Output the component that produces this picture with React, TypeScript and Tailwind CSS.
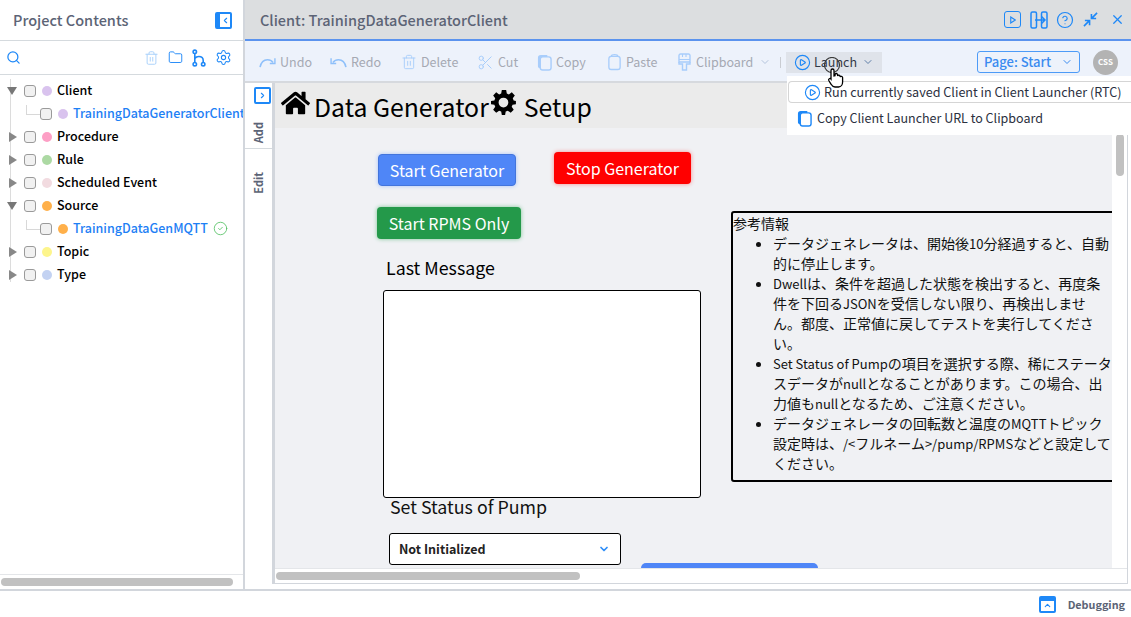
import { ChevronDown, ChevronLeft, ChevronRight, CircleCheck, Search, Trash2, Folder, Settings, Scissors, CirclePlay, CircleHelp, X } from 'lucide-react'

const font = 'font-["Noto_Sans_CJK_JP","Noto_Sans",sans-serif]'

const tree = [
  { label: 'Client', color: 'bg-[#d9c3ee]', open: true, child: 'TrainingDataGeneratorClient' },
  { label: 'Procedure', color: 'bg-[#fd9fc5]' },
  { label: 'Rule', color: 'bg-[#acd9a3]' },
  { label: 'Scheduled Event', color: 'bg-[#f2dbe0]' },
  { label: 'Source', color: 'bg-[#ffb04a]', open: true, child: 'TrainingDataGenMQTT', ok: true },
  { label: 'Topic', color: 'bg-[#fdf58c]' },
  { label: 'Type', color: 'bg-[#c3d2f2]' },
]

function Check() {
  return <span className="w-[12px] h-[12px] rounded-[3px] border border-[#9a9a9a] bg-[#f1f1f1] shrink-0" />
}

function CopyIcon({ className = '' }: { className?: string }) {
  return (
    <svg viewBox="0 0 16 18" className={className} fill="none" stroke="currentColor" strokeWidth="1.5">
      <path d="M1 4c0-2 1-3 3-3h7v2H5c-1 0-1.500.5-1.500 1.500V15H3c-1.300 0-2-.8-2-2z" fill="currentColor" stroke="none" />
      <rect x="3.500" y="3" width="11.500" height="14" rx="2.500" />
    </svg>
  )
}

function PasteIcon({ className = '' }: { className?: string }) {
  return (
    <svg viewBox="0 0 16 18" className={className} fill="none" stroke="currentColor" strokeWidth="1.4">
      <rect x="2" y="3" width="12" height="14" rx="2.500" />
      <path d="M4.500 3c0-1.200 1.200-1.800 3.500-1.800s3.500.6 3.500 1.800" />
    </svg>
  )
}

function UndoArc({ className = '', flip }: { className?: string; flip?: boolean }) {
  return (
    <svg viewBox="0 0 18 14" className={`${className} ${flip ? '-scale-x-100' : ''}`} fill="none" stroke="currentColor" strokeWidth="1.700">
      <path d="M1 12c1-5 4-8 8-8 2.500 0 4.500 1 6 3" />
      <path d="M17 2.500v5.500h-5.500" strokeWidth="1.500" />
    </svg>
  )
}

function BrushIcon({ className = '' }: { className?: string }) {
  return (
    <svg viewBox="0 0 14 18" className={className} fill="none" stroke="currentColor" strokeWidth="1.400">
      <path d="M3 1h8a1.500 1.500 0 0 1 1.500 1.500V9H1.500V2.500A1.500 1.500 0 0 1 3 1z" />
      <path d="M1.500 6.500h11M5 1v3M8.500 1v3" strokeWidth="1.100" />
      <path d="M1.500 9v2h3.500v6h4v-6h3.500V9" />
    </svg>
  )
}

function BranchIcon({ className = '' }: { className?: string }) {
  return (
    <svg viewBox="0 0 14 18" className={className} fill="none" stroke="#1e88f7" strokeWidth="1.600">
      <circle cx="2.800" cy="2.800" r="1.700" />
      <circle cx="2.800" cy="15.200" r="1.700" />
      <circle cx="11.200" cy="15.200" r="1.700" />
      <path d="M2.800 4.500v9M2.800 9.500c1-1.500 2.500-2 4-2 2.500 0 4.400 1.500 4.400 4v2" />
    </svg>
  )
}

function ToolItem({ icon, label, chevron, width }: { icon: React.ReactNode; label: string; chevron?: boolean; width: string }) {
  return (
    <div className={`flex items-center gap-[4px] text-[12.5px] text-[#a5a9b3] ${width}`}>
      <span className="text-[#a8cdfb] flex">{icon}</span>
      <span>{label}</span>
      {chevron && <ChevronDown className="w-[12px] h-[12px] ml-[2px] text-[#b4c4dc]" />}
    </div>
  )
}

function L({ children }: { children: React.ReactNode }) {
  return <span className="text-[13px] leading-none">{children}</span>
}

export default function App() {
  return (
    <div className={`w-[1131px] h-[617px] overflow-hidden bg-white flex flex-col ${font}`}>
      <div className="flex h-[589px] border-b-2 border-[#d2d6dc] box-content">
        {/* Project contents */}
        <div className="w-[243px] h-full flex flex-col shrink-0">
          <div className="h-[41px] flex items-center justify-between pl-[13px] pr-[11px] border-b border-[#d5dade]">
            <span className="text-[14.5px] font-medium text-[#5c6476]">Project Contents</span>
            <span className="w-[17px] h-[17px] rounded-[2px] border-2 border-l-[5px] border-[#1e88f7] flex items-center justify-center">
              <ChevronLeft className="w-[9px] h-[9px] text-[#1e88f7]" strokeWidth={3} />
            </span>
          </div>
          <div className="h-[34px] flex items-center pl-[6px] pr-[11px] border-b border-[#d5dade]">
            <Search className="w-[15px] h-[15px] text-[#1e88f7]" />
            <div className="ml-auto flex items-center gap-[9px]">
              <Trash2 className="w-[15px] h-[16px] text-[#a8d0fb]" strokeWidth={1.5} />
              <Folder className="w-[15px] h-[15px] text-[#1e88f7]" strokeWidth={1.5} />
              <BranchIcon className="w-[14px] h-[18px]" />
              <Settings className="w-[17px] h-[17px] text-[#1e88f7]" strokeWidth={1.5} />
            </div>
          </div>
          <div className="flex-1 pt-[4px] overflow-hidden relative">
            <div className="absolute left-[10px] top-[4px] h-[203px] w-px bg-[#dcdcdc]" />
            {tree.map((t) => (
              <div key={t.label}>
                <div className="h-[23px] flex items-center relative text-[12.5px] font-medium text-black">
                  <span className="w-[24px] flex justify-center shrink-0 pl-[1px]">
                    {t.open ? (
                      <span className="border-x-[5px] border-x-transparent border-t-[8px] border-t-[#777] -ml-[1px]" />
                    ) : (
                      <span className="border-y-[5px] border-y-transparent border-l-[8px] border-l-[#888] " />
                    )}
                  </span>
                  <Check />
                  <span className={`w-[10px] h-[10px] rounded-full ml-[6px] mr-[5px] ${t.color}`} />
                  <span>{t.label}</span>
                </div>
                {t.child && (
                  <div className="h-[23px] flex items-center text-[12.5px] font-medium text-[#1e80f5] whitespace-nowrap overflow-hidden">
                    <span className="w-[14px] h-[10px] ml-[26px] mb-[8px] border-l border-b border-[#d8d8d8] shrink-0" />
                    <Check />
                    <span className={`w-[10px] h-[10px] rounded-full ml-[6px] mr-[5px] shrink-0 ${t.color}`} />
                    <span>{t.child}</span>
                    {t.ok && <CircleCheck className="w-[15px] h-[15px] ml-[5px] text-[#4fbf5f]" strokeWidth={1.3} />}
                  </div>
                )}
              </div>
            ))}
          </div>
          <div className="h-[15px] flex items-center px-[1px] border-t border-[#e4e6e9]">
            <div className="w-[232px] h-[8px] rounded-full bg-[#c1c1c1]" />
          </div>
        </div>
        <div className="w-[2px] h-full bg-[#d2d6dc] shrink-0" />

        {/* Client editor */}
        <div className="flex-1 flex flex-col min-w-0 relative">
          <div className="h-[41px] bg-[#dcdee0] border-b-2 border-[#5b93ee] flex items-center pl-[15px] pr-[6px]">
            <span className="text-[14.5px] font-medium text-[#5c6476]">Client: TrainingDataGeneratorClient</span>
            <div className="ml-auto flex items-center text-[#1e88f7]">
              <span className="w-[17px] h-[17px] border-[1.5px] border-current rounded-[3px] flex items-center justify-center">
                <svg viewBox="0 0 8 10" className="w-[6px] h-[8px]" fill="none" stroke="currentColor" strokeWidth="1.500"><path d="M1 1l6 4-6 4z" /></svg>
              </span>
              <svg viewBox="0 0 18 18" className="w-[18px] h-[18px] ml-[9px]" fill="none" stroke="currentColor" strokeWidth="1.500">
                <rect x="1" y="1" width="5.500" height="16" rx="1.500" />
                <rect x="11.500" y="1" width="5.500" height="16" rx="1.500" />
                <path d="M5 9h10M11.500 5.500L15 9l-3.500 3.500" />
              </svg>
              <CircleHelp className="w-[18px] h-[18px] ml-[8px]" strokeWidth={1.6} />
              <svg viewBox="0 0 16 16" className="w-[15px] h-[15px] ml-[9px]" fill="none" stroke="currentColor" strokeWidth="1.700">
                <path d="M15 1L9.500 6.500M9 2v5h5M1 15l5.500-5.500M2 9h5v5" />
              </svg>
              <X className="w-[15px] h-[15px] ml-[12px]" strokeWidth={2} />
            </div>
          </div>
          <div className="h-[42px] bg-[#edf2fb] border-b-2 border-[#d6d9de] flex items-center pl-[14px] pr-[13px] pt-[2px]">
            <div className="flex items-center">
              <ToolItem width="w-[71px]" icon={<UndoArc className="w-[17px] h-[13px] text-[#8fc0fa]" />} label="Undo" />
              <ToolItem width="w-[71px]" icon={<UndoArc flip className="w-[17px] h-[13px] text-[#8fc0fa]" />} label="Redo" />
              <ToolItem width="w-[76px]" icon={<Trash2 className="w-[16px] h-[18px]" strokeWidth={1.4} />} label="Delete" />
              <ToolItem width="w-[60px]" icon={<Scissors className="w-[17px] h-[17px]" strokeWidth={1.4} />} label="Cut" />
              <ToolItem width="w-[70px]" icon={<CopyIcon className="w-[15px] h-[17px]" />} label="Copy" />
              <ToolItem width="w-[70px]" icon={<PasteIcon className="w-[15px] h-[18px]" />} label="Paste" />
              <ToolItem width="w-[103px]" icon={<BrushIcon className="w-[15px] h-[18px]" />} label="Clipboard" chevron />
            </div>
            <span className="w-px h-[11px] bg-[#c9ccd2] mr-[5px]" />
            <div className="w-[96px] h-[21px] bg-[#dfe3ea] flex items-center pl-[8px] gap-[3px] text-[12.5px] text-[#333a48]">
              <CirclePlay className="w-[17px] h-[17px] text-[#1e88f7]" strokeWidth={1.6} />
              <span>Launch</span>
              <ChevronDown className="w-[12px] h-[12px] ml-[2px] text-[#5e7ea8]" />
            </div>
            <div className="ml-auto flex items-center gap-[13px]">
              <div className="w-[103px] h-[22px] border border-[#4d9bf7] rounded-[3px] flex items-center justify-center gap-[10px] text-[13px] font-medium text-[#3a8bf0]">
                Page: Start
                <ChevronDown className="w-[12px] h-[12px]" />
              </div>
              <span className="w-[25px] h-[25px] rounded-full bg-[#b3b3b3] text-white text-[8px] font-bold flex items-center justify-center">CSS</span>
            </div>
          </div>

          <div className="flex-1 flex min-h-0 pb-[5px] pr-[3px]">
            {/* Side tabs */}
            <div className="w-[27px] shrink-0 border-r-[3px] border-[#d2d6dc] box-content flex flex-col items-center text-[#5c6476] text-[11px] font-bold">
              <span className="mt-[4px] ml-[8px] w-[17px] h-[17px] rounded-[2px] border-2 border-[#1e88f7] flex items-center justify-center shrink-0">
                <ChevronRight className="w-[9px] h-[9px] text-[#1e88f7]" strokeWidth={3} />
              </span>
              <div className="w-full h-[45px] border-b border-[#d5dade] flex items-start justify-center pt-[18px]">
                <span className="[writing-mode:vertical-rl] rotate-180">Add</span>
              </div>
              <div className="mt-[23px] [writing-mode:vertical-rl] rotate-180">Edit</div>
            </div>

            {/* Canvas */}
            <div className="flex-1 min-w-0 flex flex-col border-r border-b border-[#d2d6dc]">
              <div className="relative flex-1 min-h-0 overflow-hidden bg-[#f0f1f4]">
                <div className="h-[45px] bg-[#ebebeb] flex items-center text-[24.8px] text-black pl-[6px] pt-[2px] whitespace-nowrap">
                  <svg viewBox="0 0 576 512" className="w-[29px] h-[28px] mb-[8px]" fill="black">
                    <path d="M280 148 96 300v164c0 9 7 16 16 16l112-.3c9 0 16-7 16-16V368c0-9 7-16 16-16h64c9 0 16 7 16 16v95.700c0 9 7 16 16 16L464 480c9 0 16-7 16-16V300L296 148c-4-3-12-3-16 0zM572 251l-84-69V44c0-7-5-12-12-12h-56c-7 0-12 5-12 12v72l-89-74c-18-15-44-15-62 0L4 251c-5 4-6 12-2 17l26 31c4 5 12 6 17 2L280 108c4-3 12-3 16 0l235 193c5 4 13 3 17-2l26-31c4-5 3-13-2-17z" />
                  </svg>
                  <span className="ml-[4px]">Data Generator</span>
                  <svg viewBox="0 0 24 24" className="w-[26px] h-[26px] ml-[2px] mb-[10px]" fill="black">
                    <path d="M10 1h4l.6 3.200 1.900.8 2.700-1.900 2.800 2.800-1.900 2.700.8 1.900L23 11v3l-3.100.5-.8 1.900 1.900 2.700-2.800 2.800-2.700-1.900-1.900.8L13 24h-3l-.6-3.200-1.900-.8-2.700 1.900L2 19.100l1.900-2.700-.8-1.900L0 14v-3l3.100-.5.8-1.900L2 5.900 4.800 3.100l2.700 1.900 1.900-.8zM11.500 8a4.500 4.500 0 1 0 0 9 4.500 4.500 0 0 0 0-9z" />
                  </svg>
                  <span className="ml-[7px]">Setup</span>
                </div>

                <button className="absolute left-[103px] top-[71px] w-[138px] h-[32px] rounded-[4px] bg-[#4f86f7] border border-[#4274dc] shadow-[0_0_4px_#a9c3f9] text-white text-[16px]">Start Generator</button>
                <button className="absolute left-[279px] top-[69px] w-[137px] h-[32px] rounded-[4px] bg-[#ff0000] shadow-[0_0_4px_#f58a8a] text-white text-[16px]">Stop Generator</button>
                <button className="absolute left-[102px] top-[124px] w-[144px] h-[32px] rounded-[4px] bg-[#24994a] shadow-[0_0_4px_#7ec596] text-white text-[16px]">Start RPMS Only</button>

                <div className="absolute left-[111px] top-[171px] text-[17.8px] text-black">Last Message</div>
                <div className="absolute left-[108px] top-[207px] w-[318px] h-[208px] bg-white border border-black rounded-[3px]" />

                <div className="absolute left-[115px] top-[410px] text-[17.8px] text-[#111]">Set Status of Pump</div>
                <div className="absolute left-[114px] top-[450px] w-[232px] h-[32px] bg-white border border-black rounded-[3px] flex items-center pl-[9px] pr-[10px] text-[12.5px] font-bold text-[#222]">
                  Not Initialized
                  <ChevronDown className="w-[12px] h-[12px] ml-auto text-[#2f8ef8]" strokeWidth={3.5} />
                </div>
                <div className="absolute left-[366px] top-[480px] w-[177px] h-[20px] rounded-t-[5px] bg-[#4f86f7]" />

                <div className="absolute left-[456px] top-[128px] w-[385px] h-[271px] border-2 border-black rounded-[3px] text-[14px] leading-[20px] text-[#111]">
                  <div>参考情報</div>
                  <ul className="list-disc pl-[40px] pr-[2px] w-[382px]">
                    <li>データジェネレータは、開始後<L>10</L>分経過すると、自動的に停止します。</li>
                    <li><L>Dwell</L>は、条件を超過した状態を検出すると、再度条件を下回る<L>JSON</L>を受信しない限り、再検出しません。都度、正常値に戻してテストを実行してください。</li>
                    <li><L>Set Status of Pump</L>の項目を選択する際、稀にステータスデータが<L>null</L>となることがあります。この場合、出力値も<L>null</L>となるため、ご注意ください。</li>
                    <li>データジェネレータの回転数と温度の<L>MQTT</L>トピック設定時は、<L>/&lt;</L>フルネーム<L>&gt;/pump/RPMS</L>などと設定してください。</li>
                  </ul>
                </div>
                <div className="absolute right-0 top-[45px] bottom-0 w-[15px] bg-white">
                  <div className="mx-auto mt-[6px] w-[8px] h-[42px] rounded-full bg-[#c1c1c1]" />
                </div>
              </div>
              <div className="h-[15px] bg-white border-t border-[#e4e6e9] flex items-center pl-[1px] shrink-0">
                <div className="w-[304px] h-[8px] rounded-full bg-[#c1c1c1]" />
              </div>
            </div>
          </div>

          {/* Launch menu */}
          <div className="absolute left-[542px] top-[76px] w-[344px] h-[59px] bg-white z-10 pl-[1px] pt-[5px]">
            <div className="h-[20px] border border-[#d5d5d5] border-r-0 rounded-l-[4px] flex items-center pl-[15px] gap-[3px] text-[12.6px] text-[#2b3040] whitespace-nowrap box-content">
              <CirclePlay className="w-[17px] h-[17px] text-[#1e88f7]" strokeWidth={1.6} />
              Run currently saved Client in Client Launcher (RTC)
            </div>
            <div className="h-[30px] flex items-center pl-[9px] gap-[5px] text-[12.5px] text-[#2b3040] whitespace-nowrap">
              <CopyIcon className="w-[15px] h-[17px] text-[#1e88f7]" />
              Copy Client Launcher URL to Clipboard
            </div>
          </div>
          {/* Cursor */}
          <svg viewBox="0 0 24 33" className="absolute left-[578px] top-[57px] w-[24px] h-[33px] z-20" fill="none">
            <circle cx="9" cy="8" r="7.500" stroke="#3a3a3a" strokeWidth="1.200" />
            <path d="M8 22V13.500a1.500 1.500 0 0 1 3 0V19l1-.2v-1a1.300 1.300 0 0 1 2.600 0v1.200a1.300 1.300 0 0 1 2.500.3v.8a1.300 1.300 0 0 1 2.500.5V25c0 2.500-1.500 5-4 5h-3.600c-1.900 0-2.900-.9-3.900-2.700l-2.300-3.800c-.8-1.500 1.200-2.800 2.200-1.500z" fill="white" stroke="black" strokeWidth="1.300" />
          </svg>
        </div>
      </div>

      {/* Footer */}
      <div className="flex-1 flex items-center justify-end pr-[6px] gap-[12px]">
        <span className="w-[17px] h-[17px] rounded-[2px] border-2 border-t-[5px] border-[#1e88f7] flex items-center justify-center">
          <ChevronDown className="w-[9px] h-[9px] rotate-180 text-[#1e88f7]" strokeWidth={3} />
        </span>
        <span className="text-[10.8px] font-bold text-[#5c6476]">Debugging</span>
      </div>
    </div>
  )
}
